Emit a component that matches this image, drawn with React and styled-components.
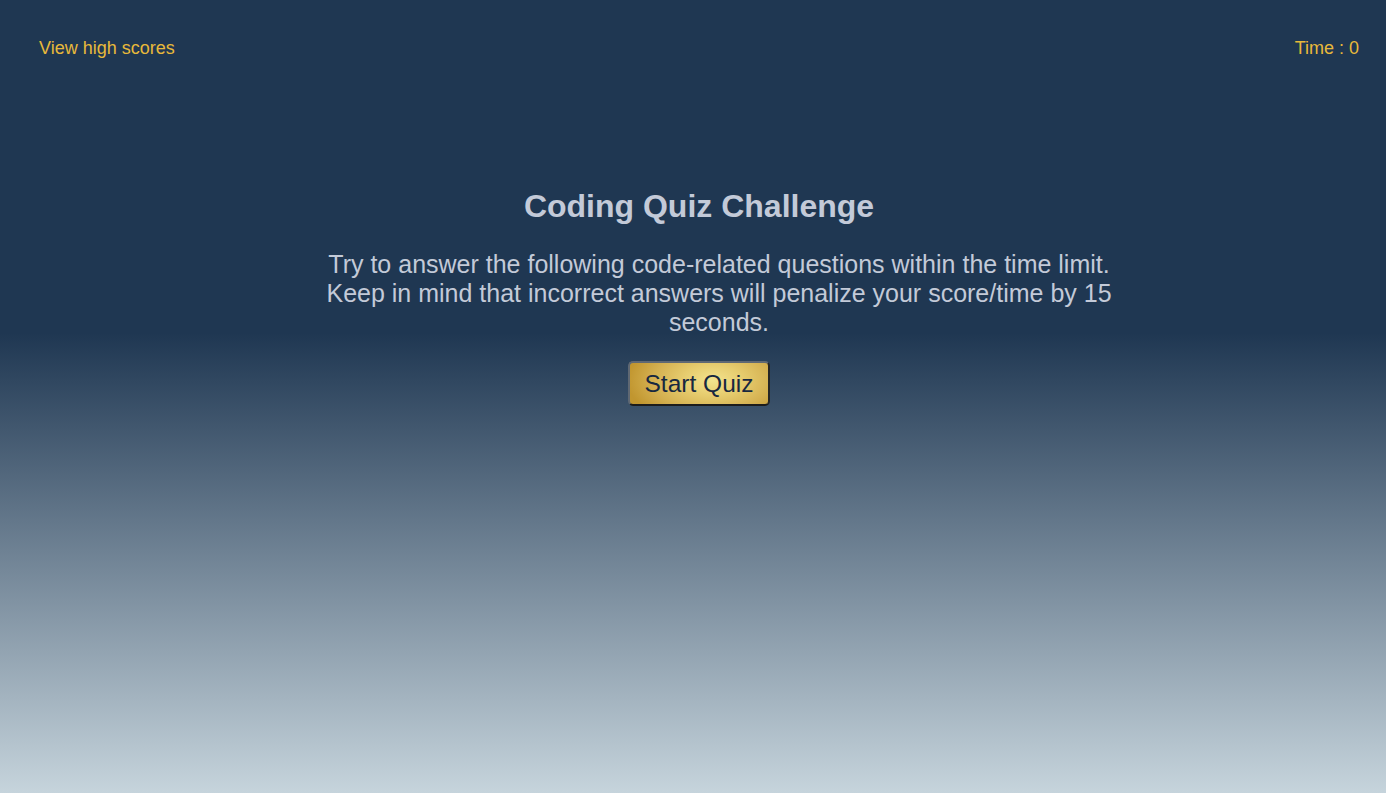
import React from "react";
import styled, { createGlobalStyle } from "styled-components";

const Global = createGlobalStyle`
  html, body { margin: 0; padding: 0; }
  body {
    min-height: 793px;
    font-family: "Liberation Sans", Arial, sans-serif;
    background: linear-gradient(to bottom, #1f3752 0%, #1f3752 42%, #c6d4dc 100%);
    background-attachment: fixed;
  }
`;

const Page = styled.div`
  min-height: 793px;
  display: flex;
  flex-direction: column;
`;

const Header = styled.header`
  display: flex;
  justify-content: space-between;
  align-items: center;
  padding: 38px 27px 0 39px;
  height: 20px;
`;

const HeaderText = styled.span`
  color: #e8b93a;
  font-size: 18px;
  line-height: 20px;
`;

const Main = styled.main`
  display: flex;
  flex-direction: column;
  align-items: center;
  padding-top: 130px;
  padding-left: 12px;
`;

const Title = styled.h1`
  margin: 0;
  font-size: 32px;
  font-weight: bold;
  color: #c3cad8;
  line-height: 36px;
`;

const Intro = styled.p`
  margin: 26px 0 0;
  padding-left: 40px;
  width: 800px;
  text-align: center;
  font-size: 25px;
  line-height: 29px;
  color: #c3cad8;
`;

const StartButton = styled.button`
  margin-top: 24px;
  width: 142px;
  height: 45px;
  font-family: "Liberation Sans", Arial, sans-serif;
  font-size: 24.5px;
  color: #172840;
  border-radius: 5px;
  border: 2px solid;
  border-color: #5f6873 #262626 #1c1c1c #5f6873;
  background: radial-gradient(ellipse 62% 110% at 60% 42%, #f3e38e 0%, #e6cc6e 35%, #d4b050 70%, #c1962f 100%);
  cursor: pointer;
  padding: 0;
`;

export default function App() {
  return (
    <>
      <Global />
      <Page>
        <Header>
          <HeaderText>View high scores</HeaderText>
          <HeaderText>Time : 0</HeaderText>
        </Header>
        <Main>
          <Title>Coding Quiz Challenge</Title>
          <Intro>
            Try to answer the following code-related questions within the time limit. Keep in mind that
            incorrect answers will penalize your score/time by 15 seconds.
          </Intro>
          <StartButton>Start Quiz</StartButton>
        </Main>
      </Page>
    </>
  );
}
